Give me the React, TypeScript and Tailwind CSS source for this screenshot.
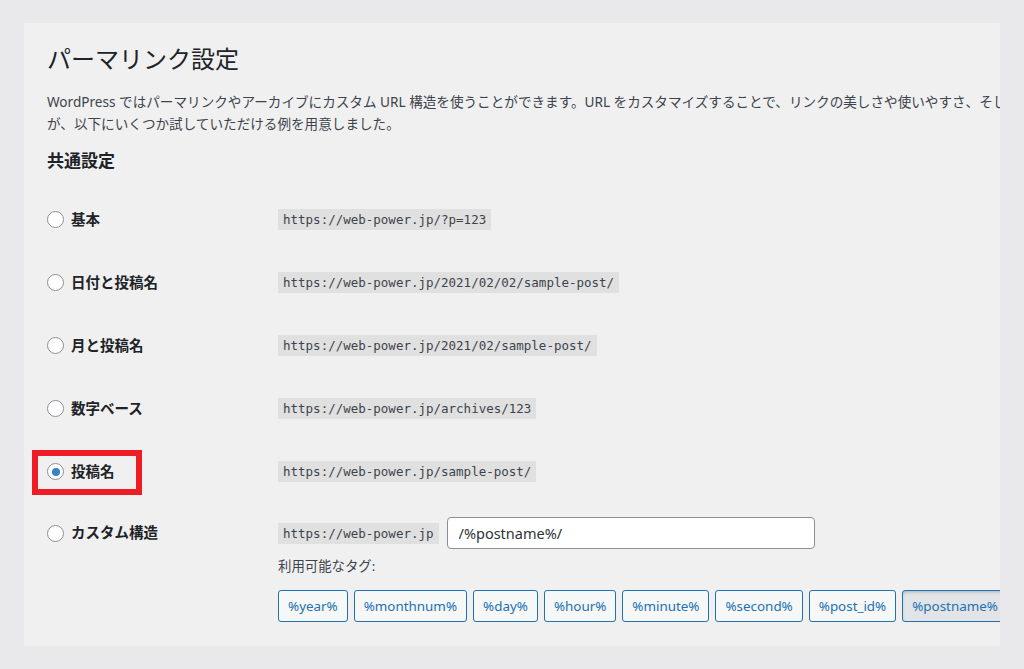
import React from "react";

type Option = {
  id: string;
  label: string;
  url: string;
};

const options: Option[] = [
  { id: "plain", label: "基本", url: "https://web-power.jp/?p=123" },
  { id: "day", label: "日付と投稿名", url: "https://web-power.jp/2021/02/02/sample-post/" },
  { id: "month", label: "月と投稿名", url: "https://web-power.jp/2021/02/sample-post/" },
  { id: "numeric", label: "数字ベース", url: "https://web-power.jp/archives/123" },
  { id: "postname", label: "投稿名", url: "https://web-power.jp/sample-post/" },
];

const tags = [
  "%year%",
  "%monthnum%",
  "%day%",
  "%hour%",
  "%minute%",
  "%second%",
  "%post_id%",
  "%postname%",
];

const sans = "font-['Noto_Sans','Noto_Sans_CJK_JP',sans-serif]";
const mono = "font-['DejaVu_Sans_Mono','Noto_Sans_CJK_JP',monospace]";

function Radio({ checked }: { checked?: boolean }) {
  return (
    <span className="flex h-[17px] w-[17px] shrink-0 items-center justify-center rounded-full border border-[#8c8f94] bg-white">
      {checked && <span className="h-[8px] w-[8px] rounded-full bg-[#3582c4]" />}
    </span>
  );
}

function Code({ children }: { children: React.ReactNode }) {
  return (
    <code
      className={`${mono} whitespace-nowrap bg-[#e0e0e1] px-[5px] py-[3px] text-[12.5px] leading-[15px] text-[#3c434a]`}
    >
      {children}
    </code>
  );
}

export default function App() {
  const selected = "postname";

  return (
    <div className={`${sans} h-[669px] w-[1024px] overflow-hidden bg-[#e9e9ec] pl-[24px] pt-[23px]`}>
      <div className="h-[623px] w-[976px] overflow-hidden bg-[#f0f0f1] pl-[23px] pt-[20px]">
        <h1 className="text-[24px] font-normal leading-[31px] text-[#1d2327]">パーマリンク設定</h1>

        <div className="mt-[17px] text-[13.6px] leading-[22px] text-[#3c434a]">
          <p className="whitespace-nowrap">
            WordPress ではパーマリンクやアーカイブにカスタム URL 構造を使うことができます。URL をカスタマイズすることで、リンクの美しさや使いやすさ、そし
          </p>
          <p>が、以下にいくつか試していただける例を用意しました。</p>
        </div>

        <h2 className="mt-[15px] text-[17px] font-bold leading-[22px] text-[#1d2327]">共通設定</h2>

        <div className="mt-[16px]">
          {options.map((o) => (
            <div key={o.id} className="relative flex h-[63px] items-center">
              <div className="flex w-[231px] shrink-0 items-center gap-[7px]">
                <Radio checked={o.id === selected} />
                <span className="text-[14.5px] font-bold text-[#1d2327]">{o.label}</span>
              </div>
              <Code>{o.url}</Code>
              {o.id === selected && (
                <span className="absolute left-[-15px] top-[10px] h-[45px] w-[110px] border-[6px] border-[#ee1c25]" />
              )}
            </div>
          ))}

          <div className="flex pt-[14px]">
            <div className="flex h-[32px] w-[231px] shrink-0 items-center gap-[7px]">
              <Radio />
              <span className="text-[14.5px] font-bold text-[#1d2327]">カスタム構造</span>
            </div>
            <div className="min-w-0 flex-1">
              <div className="flex items-center">
                <Code>https://web-power.jp</Code>
                <input
                  readOnly
                  value="/%postname%/"
                  className="ml-[8px] h-[32px] w-[368px] rounded-[4px] border border-[#8c8f94] bg-white px-[11px] text-[14.5px] text-[#2c3338] outline-none"
                />
              </div>
              <p className="mt-[7px] text-[13.4px] leading-[20px] text-[#3c434a]">利用可能なタグ:</p>
              <div className="mt-[14px] flex gap-[6px] whitespace-nowrap">
                {tags.map((t) => (
                  <button
                    key={t}
                    type="button"
                    className={
                      t === "%postname%"
                        ? "h-[32px] shrink-0 rounded-[3px] border border-[#2271b1] bg-[#e2e4e7] px-[9px] text-[13.4px] text-[#2271b1] shadow-[inset_0_2px_5px_-3px_rgba(0,0,0,0.5)]"
                        : "h-[32px] shrink-0 rounded-[3px] border border-[#2271b1] bg-[#f6f7f7] px-[9px] text-[13.4px] text-[#2271b1]"
                    }
                  >
                    {t}
                  </button>
                ))}
              </div>
            </div>
          </div>
        </div>
      </div>
    </div>
  );
}
